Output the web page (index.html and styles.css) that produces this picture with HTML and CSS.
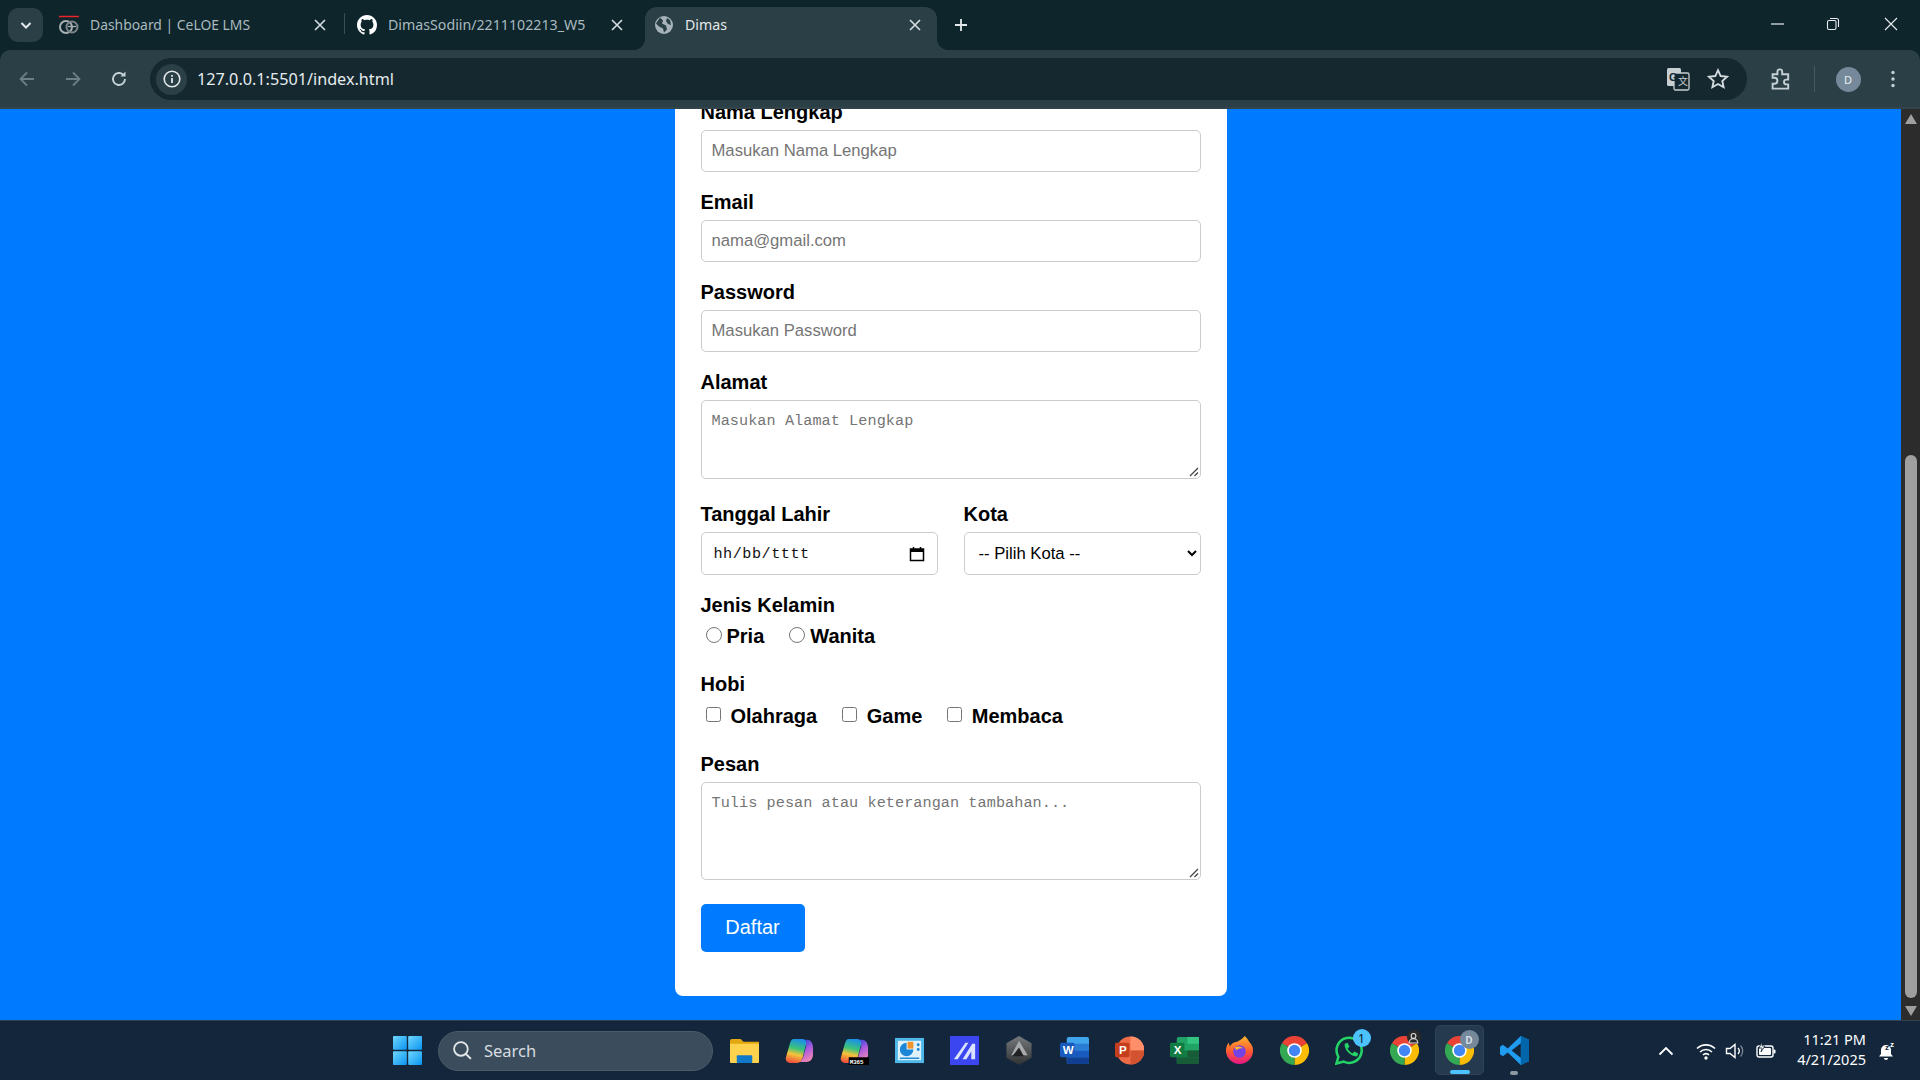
FILE: index.html
```html
<!DOCTYPE html>
<html lang="id">
<head>
<meta charset="utf-8">
<title>Dimas</title>
<link rel="stylesheet" href="styles.css">
</head>
<body>
<svg class="defs" width="0" height="0" aria-hidden="true">
  <defs>
    <symbol id="x" viewBox="0 0 14 14"><path d="M2 2l10 10M12 2L2 12" fill="none" stroke="currentColor" stroke-width="1.6"/></symbol>
    <symbol id="grip" viewBox="0 0 10 10"><path d="M9 1L1 9M9 5.500L5.500 9" fill="none" stroke="#444" stroke-width="1.300"/></symbol>
    <symbol id="chrome" viewBox="0 0 24 24">
      <path d="M12 12L1.6 6A12 12 0 0 1 22.4 6Z" fill="#ea4335"/>
      <path d="M12 12L22.4 6A12 12 0 0 1 12 24Z" fill="#fbbc04"/>
      <path d="M12 12L12 24A12 12 0 0 1 1.6 6Z" fill="#34a853"/>
      <circle cx="12" cy="12" r="6" fill="#fff"/><circle cx="12" cy="12" r="4.7" fill="#4285f4"/>
    </symbol>
    <linearGradient id="win" x1="0" y1="0" x2="1" y2="1"><stop offset="0" stop-color="#6fd7ff"/><stop offset="1" stop-color="#0a94f0"/></linearGradient>
    <linearGradient id="cop" x1=".6" y1="0" x2=".4" y2="1"><stop offset="0" stop-color="#1b8fe8"/><stop offset=".4" stop-color="#3cc47a"/><stop offset=".65" stop-color="#f5c33b"/><stop offset="1" stop-color="#f0503c"/></linearGradient>
    <linearGradient id="cop2" x1=".3" y1="0" x2=".7" y2="1"><stop offset="0" stop-color="#2a48d8"/><stop offset=".45" stop-color="#a85ae0"/><stop offset="1" stop-color="#f58ab0"/></linearGradient>
    <linearGradient id="fox" x1="0" y1="0" x2="0" y2="1"><stop offset="0" stop-color="#ffb52e"/><stop offset=".55" stop-color="#ff5a30"/><stop offset="1" stop-color="#e31587"/></linearGradient>
    <linearGradient id="hexg" x1="0" y1="0" x2="0" y2="1"><stop offset="0" stop-color="#777a7d"/><stop offset="1" stop-color="#2f3133"/></linearGradient>
  </defs>
</svg>

<div class="browser">
  <header class="tabstrip">
    <button class="tabsearch"><svg width="14" height="14" viewBox="0 0 14 14"><path d="M2.5 5l4.5 4.5L11.500 5" fill="none" stroke="#e4eaec" stroke-width="2"/></svg></button>
    <div class="tab tab-first">
      <svg class="favicon" viewBox="0 0 20 20"><path d="M0 1.500h20" stroke="#e8262a" stroke-width="1.500"/><circle cx="7" cy="12" r="6" fill="none" stroke="#a9b0b2" stroke-width="2"/><circle cx="13" cy="12" r="5.500" fill="none" stroke="#7d8588" stroke-width="2"/><path d="M9 11.500h8" stroke="#a9b0b2" stroke-width="1.300"/></svg>
      <span class="tab-title tab-title-tight">Dashboard | CeLOE LMS</span>
      <svg class="tab-close"><use href="#x"/></svg>
    </div>
    <div class="tab-sep"></div>
    <div class="tab tab-second">
      <svg class="favicon" viewBox="0 0 16 16"><path fill="#fff" d="M8 0C3.580 0 0 3.580 0 8c0 3.540 2.290 6.530 5.470 7.590.4.070.55-.17.55-.38 0-.19-.01-.82-.01-1.490-2.010.37-2.530-.49-2.690-.94-.09-.23-.48-.94-.82-1.130-.28-.15-.68-.52-.01-.53.63-.01 1.080.58 1.230.82.72 1.210 1.870.87 2.330.66.070-.52.280-.87.510-1.070-1.780-.2-3.640-.89-3.640-3.950 0-.87.310-1.590.82-2.150-.08-.2-.36-1.020.08-2.120 0 0 .67-.21 2.200.82.640-.18 1.320-.27 2-.27s1.360.09 2 .27c1.530-1.040 2.200-.82 2.200-.82.440 1.100.160 1.920.080 2.120.51.560.82 1.270.82 2.150 0 3.070-1.870 3.750-3.650 3.950.29.250.54.730.54 1.480 0 1.070-.01 1.930-.01 2.200 0 .21.150.46.550.38A8.010 8.010 0 0 0 16 8c0-4.420-3.580-8-8-8z"/></svg>
      <span class="tab-title">DimasSodiin/2211102213_W5</span>
      <svg class="tab-close"><use href="#x"/></svg>
    </div>
    <div class="tab tab-active">
      <svg class="favicon" viewBox="0 0 20 20"><circle cx="10" cy="10" r="9" fill="#a6b3b8"/><path d="M6 2.500l3 3-1 3 4 2 1 4-3 3-1-4-4-2-3-3zM13 3l3 2 1 5-3-1-2-3z" fill="#2b3f46"/></svg>
      <span class="tab-title">Dimas</span>
      <svg class="tab-close"><use href="#x"/></svg>
    </div>
    <svg class="newtab" viewBox="0 0 14 14"><path d="M7 1v12M1 7h12" stroke="#e4eaec" stroke-width="1.800"/></svg>
    <div class="win-controls">
      <svg class="win-min" viewBox="0 0 14 14"><path d="M0 7h13" stroke="#e8eef0" stroke-width="1.200"/></svg>
      <svg class="win-restore" viewBox="0 0 14 14"><rect x="1.500" y="3.500" width="8.500" height="9" rx="1.500" fill="none" stroke="#e8eef0" stroke-width="1.100"/><path d="M4 1.500h6.500a2 2 0 0 1 2 2V10" fill="none" stroke="#e8eef0" stroke-width="1.100"/></svg>
      <svg class="win-close" viewBox="0 0 14 14"><path d="M1 1l12 12M13 1L1 13" stroke="#e8eef0" stroke-width="1.100"/></svg>
    </div>
  </header>

  <nav class="toolbar">
    <svg class="nav-icon" viewBox="0 0 20 20"><path d="M17 10H4M10 3.500L3.500 10l6.500 6.500" fill="none" stroke="#6d7f85" stroke-width="1.800"/></svg>
    <svg class="nav-icon" viewBox="0 0 20 20"><path d="M3 10h13M10 3.500l6.500 6.500-6.500 6.500" fill="none" stroke="#6d7f85" stroke-width="1.800"/></svg>
    <svg class="nav-icon" viewBox="0 0 20 20"><path d="M16 10a6 6 0 1 1-1.800-4.300" fill="none" stroke="#c3d0d4" stroke-width="1.900"/><path d="M16.500 2.500v5h-5z" fill="#c3d0d4"/></svg>
    <div class="omnibox">
      <span class="site-info"><svg width="20" height="20" viewBox="0 0 20 20"><circle cx="10" cy="10" r="7.800" fill="none" stroke="#e2e9eb" stroke-width="1.600"/><path d="M10 9v5M10 6v1.800" stroke="#e2e9eb" stroke-width="1.800"/></svg></span>
      <span class="url">127.0.0.1:5501/index.html</span>
      <svg class="omni-translate" viewBox="0 0 24 24"><rect x="1" y="1" width="14" height="18" rx="1.500" fill="#c7cfd2"/><rect x="8" y="6" width="15" height="17" rx="1.500" fill="#15282f" stroke="#c7cfd2" stroke-width="1.300"/><text class="svg-g" x="3" y="14">G</text><text class="svg-z" x="12" y="18">文</text></svg>
      <svg class="omni-star" viewBox="0 0 20 20"><path d="M10 2l2.400 5.300 5.800.600-4.300 3.900 1.200 5.700L10 14.600l-5.100 2.900 1.200-5.700L1.800 7.900l5.800-.600z" fill="none" stroke="#d2dcdf" stroke-width="1.700"/></svg>
    </div>
    <svg class="tb-ext" viewBox="0 0 20 20"><path d="M3 6h4V4a2 2 0 0 1 4 0v2h5v4.500h-1.500a2 2 0 0 0 0 4H16V18H3v-4h1.500a2.500 2.500 0 0 0 0-5H3z" fill="none" stroke="#c3d0d4" stroke-width="1.600"/></svg>
    <span class="tb-sep"></span>
    <span class="avatar">D</span>
    <svg class="tb-menu" viewBox="0 0 6 20"><circle cx="3" cy="3.500" r="1.700" fill="#c3d0d4"/><circle cx="3" cy="10" r="1.700" fill="#c3d0d4"/><circle cx="3" cy="16.500" r="1.700" fill="#c3d0d4"/></svg>
  </nav>

  <div class="viewport">
    <main class="page">
      <form class="card">
        <div class="group">
          <label class="lbl">Nama Lengkap</label>
          <input class="field" type="text" placeholder="Masukan Nama Lengkap">
        </div>
        <div class="group">
          <label class="lbl">Email</label>
          <input class="field" type="text" placeholder="nama@gmail.com">
        </div>
        <div class="group">
          <label class="lbl">Password</label>
          <input class="field" type="text" placeholder="Masukan Password">
        </div>
        <div class="group group-area">
          <label class="lbl">Alamat</label>
          <div class="area-wrap">
            <textarea class="field area area-small" placeholder="Masukan Alamat Lengkap"></textarea>
            <svg class="grip"><use href="#grip"/></svg>
          </div>
        </div>
        <div class="group two-col">
          <div>
            <label class="lbl">Tanggal Lahir</label>
            <div class="field date"><span class="date-text">hh/bb/tttt</span>
              <svg class="cal" viewBox="0 0 16 16"><path d="M1.500 3h13v11.500h-13z" fill="none" stroke="#000" stroke-width="1.500"/><path d="M1.500 3h13v3h-13z" fill="#000"/><path d="M4.500 1v2M11.500 1v2" stroke="#000" stroke-width="1.500"/></svg>
            </div>
          </div>
          <div>
            <label class="lbl">Kota</label>
            <select class="field select"><option>-- Pilih Kota --</option></select>
          </div>
        </div>
        <div class="group-options">
          <div class="lbl">Jenis Kelamin</div>
          <div class="opts opts-radio">
            <label class="opt"><input class="radio" type="radio" name="g">Pria</label>
            <label class="opt"><input class="radio" type="radio" name="g">Wanita</label>
          </div>
        </div>
        <div class="group-options">
          <div class="lbl">Hobi</div>
          <div class="opts opts-check">
            <label class="opt"><input class="check" type="checkbox">Olahraga</label>
            <label class="opt"><input class="check" type="checkbox">Game</label>
            <label class="opt"><input class="check" type="checkbox">Membaca</label>
          </div>
        </div>
        <div class="group group-area">
          <label class="lbl">Pesan</label>
          <div class="area-wrap">
            <textarea class="field area area-large" placeholder="Tulis pesan atau keterangan tambahan..."></textarea>
            <svg class="grip"><use href="#grip"/></svg>
          </div>
        </div>
        <button class="submit" type="button">Daftar</button>
      </form>
    </main>
    <div class="scrollbar">
      <span class="arrow arrow-up"></span>
      <span class="thumb"></span>
      <span class="arrow arrow-down"></span>
    </div>
  </div>

  <footer class="taskbar">
    <div class="slot"><svg class="ic" viewBox="0 0 30 30"><rect width="14.300" height="14.300" rx="1" fill="url(#win)"/><rect x="15.700" width="14.300" height="14.300" rx="1" fill="url(#win)"/><rect y="15.700" width="14.300" height="14.300" rx="1" fill="url(#win)"/><rect x="15.700" y="15.700" width="14.300" height="14.300" rx="1" fill="url(#win)"/></svg></div>
    <div class="searchbox">
      <svg class="search-ic" viewBox="0 0 20 20"><circle cx="8.500" cy="8.500" r="6.500" fill="none" stroke="#e4e8ea" stroke-width="1.700"/><path d="M13.300 13.300L18 18" stroke="#e4e8ea" stroke-width="1.900"/></svg>
      <span>Search</span>
    </div>
    <div class="slot"><svg class="ic" viewBox="0 0 30 30"><path d="M0 5a2 2 0 0 1 2-2h9l3 3h16v21H0z" fill="#e3a80f"/><path d="M0 8h30v19a1 1 0 0 1-1 1H1a1 1 0 0 1-1-1z" fill="#ffd24d"/><rect x="7" y="20" width="16" height="8" rx="1" fill="#0f78c8"/></svg></div>
    <div class="slot"><svg class="ic" viewBox="0 0 30 30"><path d="M17 4h6c4 0 6 4 6 9v6c0 5-3 8-7 8h-8c3-1 4-3 5-6l3-11c0-3-2-5-5-6z" fill="url(#cop2)"/><path d="M9 3h9c3 0 4 3 4 5l-4 15c-1 3-3 5-6 5H6c-4 0-6-3-5-6l4-14c1-3 2-5 4-5z" fill="url(#cop)"/></svg></div>
    <div class="slot"><svg class="ic" viewBox="0 0 30 30"><path d="M17 4h6c4 0 6 4 6 9v6c0 5-3 8-7 8h-8c3-1 4-3 5-6l3-11c0-3-2-5-5-6z" fill="url(#cop2)"/><path d="M9 3h9c3 0 4 3 4 5l-4 15c-1 3-3 5-6 5H6c-4 0-6-3-5-6l4-14c1-3 2-5 4-5z" fill="url(#cop)"/><rect x="9" y="22" width="21" height="8" fill="#000"/><text class="svg-m365" x="10" y="28.500">M365</text></svg></div>
    <div class="slot"><svg class="ic" viewBox="0 0 30 30"><rect y="2" width="30" height="26" fill="#4fb8ea"/><rect x="3" y="5" width="24" height="20" fill="#dff2fb"/><path d="M12 7a7 7 0 1 0 7 7h-7z" fill="#1b87d6"/><path d="M13 6h6v7h-6z" fill="#f0932b"/><circle cx="24" cy="9" r="1.500" fill="#1b87d6"/><circle cx="24" cy="14" r="1.500" fill="#1b87d6"/><path d="M5 23h20" stroke="#1b87d6" stroke-width="1.500"/></svg></div>
    <div class="slot"><svg class="ic" viewBox="0 0 30 30"><rect width="30" height="30" fill="#3b46f0"/><path d="M4 24L16 7h3L8 24zM13 24L23 8h3v16h-4v-8l-5 8z" fill="#dbe2ff"/></svg></div>
    <div class="slot"><svg class="ic ic-hex" viewBox="0 0 26 30"><path d="M13 0l13 7.500v15L13 30 0 22.500v-15z" fill="url(#hexg)"/><path d="M13 5L22 20H5z" fill="#a8abae"/><path d="M13 12l5 9H6z" fill="#1f2123"/></svg></div>
    <div class="slot"><svg class="ic" viewBox="0 0 30 30"><rect x="7" y="1" width="23" height="28" rx="2" fill="#41a5ee"/><rect x="7" y="8" width="23" height="7" fill="#2b7cd3"/><rect x="7" y="15" width="23" height="7" fill="#185abd"/><path d="M7 22h23v5a2 2 0 0 1-2 2H9a2 2 0 0 1-2-2z" fill="#103f91"/><rect y="7" width="15" height="15" rx="1.500" fill="#185abd"/><text class="svg-app" x="2.800" y="19">W</text></svg></div>
    <div class="slot"><svg class="ic" viewBox="0 0 30 30"><circle cx="16" cy="15" r="14.500" fill="#ed6c47"/><path d="M16 .5a14.500 14.500 0 0 1 14.500 14.500H16z" fill="#ff8f6b"/><path d="M16 15h14.500A14.500 14.500 0 0 1 16 29.500z" fill="#d35230"/><rect y="7" width="15" height="15" rx="1.500" fill="#c43e1c"/><text class="svg-app" x="4.200" y="19">P</text></svg></div>
    <div class="slot"><svg class="ic" viewBox="0 0 30 30"><rect x="7" y="1" width="23" height="28" rx="2" fill="#21a366"/><rect x="18" y="1" width="12" height="7" fill="#33c481"/><rect x="7" y="15" width="23" height="7" fill="#107c41"/><rect x="18" y="15" width="12" height="7" fill="#185c37"/><rect x="7" y="22" width="23" height="7" fill="#185c37"/><rect y="7" width="15" height="15" rx="1.500" fill="#107c41"/><text class="svg-app" x="3.800" y="19">X</text></svg></div>
    <div class="slot"><svg class="ic" viewBox="0 0 30 30"><path d="M15 29A14 14 0 0 1 1 15c0-3 1-6 3-8l1 4c2-4 6-5 8-5 2-2 6-3 7-6 2 1 4 4 5 6 3 3 4 6 4 9a14 14 0 0 1-14 14z" fill="url(#fox)"/><circle cx="15" cy="16" r="6.500" fill="#7542e5"/><path d="M10 12c3-2 7-1 9 1-3-1-6 0-7 2z" fill="#ffb52e"/></svg></div>
    <div class="slot"><svg class="ic"><use href="#chrome"/></svg></div>
    <div class="slot badged">
      <svg class="ic" viewBox="0 0 30 30"><path d="M1.500 28.500l2-7A13 13 0 1 1 9 26.500z" fill="none" stroke="#25d366" stroke-width="2.600"/><path d="M10 8l3-1 2 4-2 2c1 2 3 4 5 5l2-2 4 2-1 3c-6 1-14-7-13-13z" fill="#25d366"/></svg>
      <span class="count">1</span>
    </div>
    <div class="slot badged">
      <svg class="ic"><use href="#chrome"/></svg>
      <span class="pbadge"><svg width="13" height="13" viewBox="0 0 12 12"><circle cx="6" cy="4.500" r="2.200" fill="none" stroke="#ddd" stroke-width="1"/><path d="M2 11a4 4 0 0 1 8 0z" fill="none" stroke="#ddd" stroke-width="1"/></svg></span>
    </div>
    <div class="slot slot-active badged">
      <svg class="ic"><use href="#chrome"/></svg>
      <span class="dbadge">D</span>
      <span class="run run-on"></span>
    </div>
    <div class="slot">
      <svg class="ic" viewBox="0 0 30 30"><path d="M21.500 0L30 4v22l-8.500 4L8 17l-5 4-3-2v-8l3-2 5 4z" fill="#1f9cf0"/><path d="M21.500 0L30 4v22l-8.500 4z" fill="#0065a9"/><path d="M21.500 7.500L12 15l9.500 7.500z" fill="#13253a"/></svg>
      <span class="run run-off"></span>
    </div>
    <div class="tray">
      <svg class="tray-ic" viewBox="0 0 20 20"><path d="M3.500 13.500L10 7l6.500 6.500" fill="none" stroke="#fff" stroke-width="1.800"/></svg>
      <svg class="tray-ic tray-wifi" viewBox="0 0 20 20"><path d="M1 7.500a13 13 0 0 1 18 0M4 11a8.500 8.500 0 0 1 12 0M7 14a4 4 0 0 1 6 0" fill="none" stroke="#fff" stroke-width="1.600"/><circle cx="10" cy="17" r="1.700" fill="#fff"/></svg>
      <svg class="tray-ic tray-vol" viewBox="0 0 20 20"><path d="M1.500 7.500h3.500l5-4v13l-5-4H1.500z" fill="none" stroke="#fff" stroke-width="1.400"/><path d="M13 7a4.500 4.500 0 0 1 0 6" fill="none" stroke="#fff" stroke-width="1.300"/><path d="M15.500 4.500a8 8 0 0 1 0 11" fill="none" stroke="#7a8794" stroke-width="1.300"/></svg>
      <svg class="tray-ic tray-bat" viewBox="0 0 20 20"><rect x="1" y="5" width="16" height="11" rx="2" fill="#13263b" stroke="#fff" stroke-width="1.400"/><rect x="3" y="7" width="12" height="7" rx="1" fill="#fff"/><rect x="17.500" y="8.500" width="2" height="4" rx="1" fill="#fff"/><path d="M6 1L3 7h3l-1 4 4-6H6z" fill="#fff" stroke="#13263b" stroke-width=".8"/></svg>
      <div class="clock"><span>11:21 PM</span><span>4/21/2025</span></div>
      <svg class="tray-ic tray-bell" viewBox="0 0 20 20"><path d="M10 4a5 5 0 0 0-5 5v4l-2 2.500h14L15 13V9a5 5 0 0 0-5-5z" fill="#fff"/><path d="M8 17a2 2 0 0 0 4 0z" fill="#fff"/><text class="svg-zz" x="9" y="9" >z</text><text class="svg-zz2" x="14" y="6">z</text></svg>
    </div>
  </footer>
</div>
</body>
</html>
```

FILE: styles.css
```css
* { box-sizing: border-box; }
html, body { margin: 0; height: 100%; overflow: hidden; }
body { font-family: "Liberation Sans", Arial, sans-serif; color: #000; }
.defs { position: absolute; }
.browser { width: 1920px; height: 1080px; display: flex; flex-direction: column; background: #0e252c; }

/* tab strip */
.tabstrip { height: 50px; flex: none; display: flex; align-items: flex-end; padding-left: 8px; color: #a9babf; background: #0e252c; font-family: "Noto Sans", sans-serif; font-size: 14.200px; }
.tabsearch { width: 35px; height: 34px; border: 0; border-radius: 10px; background: #2b3f46; display: flex; align-items: center; justify-content: center; padding: 0; margin: 0 6px 8px 0; }
.tab { width: 297px; height: 43px; display: flex; align-items: center; padding: 0 19px 8px 10px; flex: none; }
.tab-first { width: 295px; padding-right: 17px; }
.tab-second { width: 296px; }
.tab-sep { width: 1px; height: 21px; background: #3b4e55; margin: 0 2px 16px 0; flex: none; }
.tab-active { width: 292px; padding: 0 15px 8px 9px; background: #2b3f46; border-radius: 12px 12px 0 0; color: #e3e9eb; position: relative; margin-left: 2px; }
.tab-active::before, .tab-active::after { content: ""; position: absolute; bottom: 0; width: 12px; height: 12px; }
.tab-active::before { left: -12px; background: radial-gradient(circle at 0 0, transparent 12px, #2b3f46 12.500px); }
.tab-active::after { right: -12px; background: radial-gradient(circle at 100% 0, transparent 12px, #2b3f46 12.500px); }
.favicon { width: 20px; height: 20px; flex: none; margin-right: 11px; }
.tab-title { flex: 1; white-space: nowrap; overflow: hidden; }
.tab-title-tight { font-size: 13.900px; }
.tab-close { width: 14px; height: 14px; flex: none; color: #d5dfe2; }
.newtab { width: 14px; height: 14px; flex: none; margin: 0 0 18px 17px; }
.win-controls { margin-left: auto; display: flex; align-items: center; height: 50px; align-self: flex-start; }
.win-min, .win-restore, .win-close { width: 14px; height: 14px; margin-bottom: 3px; }
.win-restore { margin-left: 41px; }
.win-close { margin-left: 44px; margin-right: 22px; }

/* toolbar */
.toolbar { height: 59px; flex: none; background: #2b3f46; border-radius: 10px 10px 0 0; border-bottom: 2px solid #33444a; display: flex; align-items: center; padding: 1px 0 0 17px; }
.nav-icon { width: 20px; height: 20px; flex: none; margin-right: 26px; }
.omnibox { width: 1597px; height: 42px; margin-left: -5px; flex: none; background: #15282f; border-radius: 21px; display: flex; align-items: center; padding: 0 18px 0 6px; }
.site-info { width: 31px; height: 31px; border-radius: 50%; background: #2b3f46; display: flex; align-items: center; justify-content: center; flex: none; }
.url { margin-left: 10px; font-family: "Noto Sans", sans-serif; font-size: 16.200px; color: #e6ecee; flex: 1; white-space: nowrap; }
.omni-translate { width: 24px; height: 24px; flex: none; }
.svg-g { font: bold 11px "Liberation Sans", sans-serif; fill: #15282f; }
.svg-z { font: 10px "Noto Sans CJK SC", sans-serif; fill: #c7cfd2; }
.omni-star { width: 22px; height: 22px; margin-left: 17px; flex: none; }
.tb-ext { width: 24px; height: 24px; flex: none; margin-left: 21.600px; }
.tb-sep { width: 1px; height: 26px; background: #465a60; margin-left: 21px; flex: none; }
.avatar { width: 25px; height: 25px; border-radius: 50%; background: #75899a; color: #e8eef0; font: 11px "Noto Sans", sans-serif; display: flex; align-items: center; justify-content: center; margin-left: 21px; flex: none; }
.tb-menu { width: 6px; height: 20px; margin-left: 29.500px; flex: none; }

/* page */
.viewport { flex: 1; min-height: 0; display: flex; }
.page { flex: 1; min-width: 0; background: #007bff; display: flex; justify-content: center; align-items: flex-start; overflow: hidden; }
.card { width: 552px; flex: none; margin-top: -8.500px; background: #fff; border-radius: 0 0 8px 8px; padding: 0 26px 44px; }
.group { margin-bottom: 18.750px; }
.group-area { margin-bottom: 23.750px; }
.lbl { display: block; font-size: 20px; font-weight: 700; line-height: 23px; margin-bottom: 6.250px; }
.field { display: block; width: 100%; height: 42px; border: 1px solid #ccc; border-radius: 5px; padding: 10px; margin: 0; background: #fff; font-family: "Liberation Sans", Arial, sans-serif; font-size: 16.670px; color: #000; outline: none; }
.field::placeholder { color: #757575; }
.area-wrap { position: relative; }
.area { font-family: "Liberation Mono", monospace; font-size: 15.200px; letter-spacing: .06px; line-height: 19px; padding-top: 11px; resize: none; }
.grip { position: absolute; right: 2px; bottom: 2px; width: 10px; height: 10px; }
.area-small { height: 79px; }
.area-large { height: 98px; }
.two-col { display: grid; grid-template-columns: 237px 237px; column-gap: 26px; }
.date { height: 43px; display: flex; align-items: center; justify-content: space-between; padding: 2px 12px 0; }
.date-text { font-family: "Liberation Mono", monospace; font-size: 15.200px; letter-spacing: .5px; color: #111; }
.cal { width: 16px; height: 16px; }
.select { height: 43px; padding: 0 5px 0 10px; }
.group-options { margin-bottom: 0; }
.opts { display: flex; font-size: 20px; font-weight: 700; line-height: 23px; margin-left: 5px; column-gap: 25px; }
.opts-radio { height: 27px; margin-bottom: 23px; }
.opts-check { height: 28px; margin-bottom: 23px; column-gap: 24.500px; }
.opt { display: flex; align-items: center; }
.radio { width: 16px; height: 16px; margin: 0 5px 2px 0; flex: none; }
.check { width: 15px; height: 15px; margin: 0 10px 4px 0; flex: none; }
.submit { display: block; width: 104px; height: 48px; border: 0; border-radius: 5px; background: #007bff; color: #fff; font: 20px "Liberation Sans", Arial, sans-serif; padding: 0 0 2px; }

/* scrollbar */
.scrollbar { width: 19px; flex: none; background: #2c2c2c; display: flex; flex-direction: column; align-items: center; padding: 5px 0 4px 1px; }
.arrow { width: 0; height: 0; border-left: 6.500px solid transparent; border-right: 6.500px solid transparent; flex: none; }
.arrow-up { border-bottom: 10px solid #9f9f9f; }
.arrow-down { border-top: 10px solid #9f9f9f; margin-top: 8px; }
.thumb { width: 12px; height: 543px; margin-top: auto; background: #9f9f9f; border-radius: 6px; flex: none; }

/* taskbar */
.taskbar { height: 60px; flex: none; background: #13263b; border-top: 1px solid #33424f; display: flex; align-items: center; padding-left: 380px; }
.slot { width: 55px; height: 50px; flex: none; display: flex; align-items: center; justify-content: center; position: relative; margin-top: -1px; }
.ic { width: 29px; height: 29px; }
.ic-hex { width: 26px; }
.searchbox { width: 275px; height: 40px; flex: none; margin: 0 3.500px 0 3px; border-radius: 20px; background: #3b4d5c; border: 1px solid #4a5b69; display: flex; align-items: center; padding-left: 13px; color: #d8dde0; font: 16.500px "Noto Sans", sans-serif; }
.search-ic { width: 21px; height: 21px; margin-right: 11px; }
.svg-app { font: bold 12px "Liberation Sans", sans-serif; fill: #fff; }
.svg-m365 { font: bold 6px "Liberation Mono", monospace; fill: #fff; }
.svg-zz { font: bold 8px "Liberation Sans", sans-serif; fill: #13263b; }
.svg-zz2 { font: bold 8px "Liberation Sans", sans-serif; fill: #fff; }
.count { position: absolute; top: 4px; left: 31px; width: 18px; height: 18px; border-radius: 50%; background: #4cc2ff; color: #0b1a28; font: 12px "Noto Sans", sans-serif; display: flex; align-items: center; justify-content: center; }
.pbadge { position: absolute; top: 5px; left: 30px; width: 14px; height: 14px; border-radius: 50%; background: #2a2a2a; display: flex; align-items: center; justify-content: center; }
.slot-active { width: 49px; margin: -1px 3px 0; background: #253a4e; border: 1px solid #2e4357; border-radius: 5px; }
.dbadge { position: absolute; top: 4px; left: 24px; width: 19px; height: 19px; border-radius: 50%; background: #75899a; color: #d5dde3; font: bold 10px "Noto Sans", sans-serif; display: flex; align-items: center; justify-content: center; }
.run { position: absolute; bottom: 0; height: 4px; border-radius: 2px; }
.run-on { width: 20px; left: 14px; background: #4cc2ff; }
.run-off { width: 8px; left: 23.500px; background: #8d98a3; }
.tray { margin-left: auto; width: 264px; flex: none; display: flex; align-items: center; color: #fff; padding-right: 24px; }
.tray-ic { width: 20px; height: 20px; flex: none; }
.tray-wifi { margin-left: 20px; }
.tray-vol { margin-left: 9px; }
.tray-bat { margin-left: 11px; }
.clock { flex: 1; display: flex; flex-direction: column; align-items: flex-end; font: 14.500px/20px "Noto Sans", sans-serif; margin: -4px 10px 0 0; }
```
